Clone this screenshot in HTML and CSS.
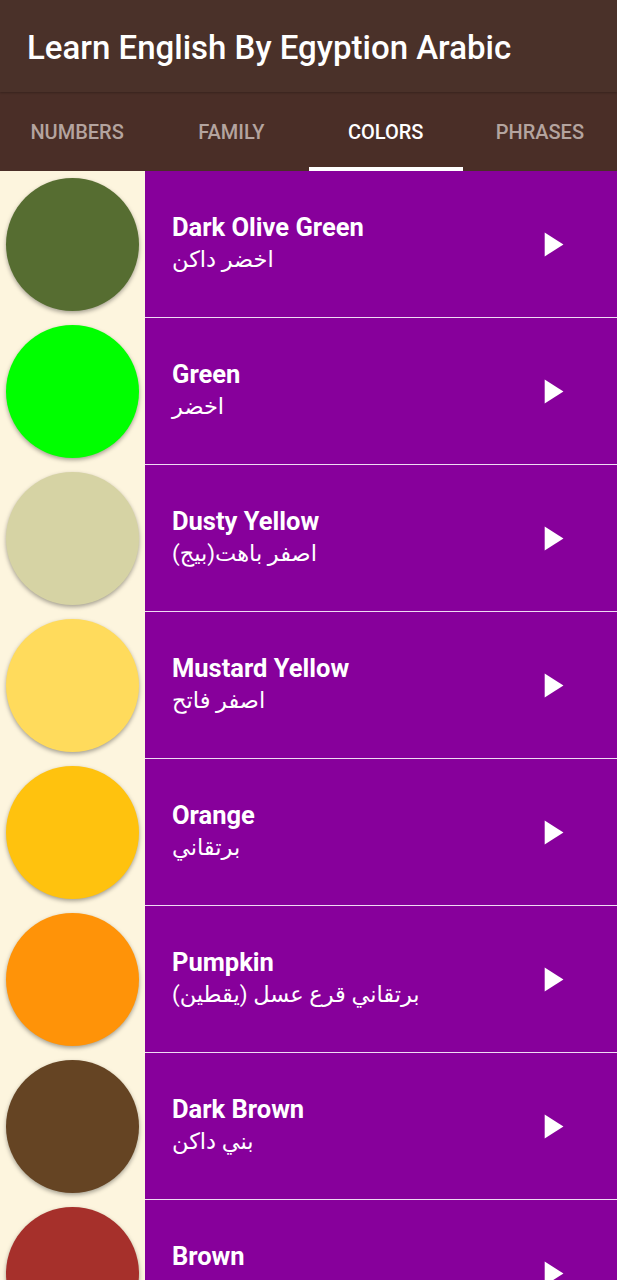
FILE: index.html
```html
<!DOCTYPE html>
<html>
<head>
<meta charset="utf-8">
<link rel="stylesheet" href="styles.css">
</head>
<body>
<header class="appbar">
  <h1 class="title">Learn English By Egyption Arabic</h1>
</header>
<nav class="tabs">
  <div class="tab">NUMBERS</div>
  <div class="tab">FAMILY</div>
  <div class="tab active">COLORS</div>
  <div class="tab">PHRASES</div>
</nav>
<main class="list">
  <div class="row">
    <div class="swatch-cell"><div class="swatch" style="background:#566d31"></div></div>
    <div class="info">
      <div class="texts"><div class="en">Dark Olive Green</div><div class="ar"><span dir="rtl">اخضر داكن</span></div></div>
      <svg class="play" viewBox="0 0 24 24"><path d="M8 5v14l11-7z"/></svg>
    </div>
  </div>
  <div class="row">
    <div class="swatch-cell"><div class="swatch" style="background:#00ff00"></div></div>
    <div class="info">
      <div class="texts"><div class="en">Green</div><div class="ar"><span dir="rtl">اخضر</span></div></div>
      <svg class="play" viewBox="0 0 24 24"><path d="M8 5v14l11-7z"/></svg>
    </div>
  </div>
  <div class="row">
    <div class="swatch-cell"><div class="swatch" style="background:#d6d3a4"></div></div>
    <div class="info">
      <div class="texts"><div class="en">Dusty Yellow</div><div class="ar"><span dir="rtl">اصفر باهت(بيج)</span></div></div>
      <svg class="play" viewBox="0 0 24 24"><path d="M8 5v14l11-7z"/></svg>
    </div>
  </div>
  <div class="row">
    <div class="swatch-cell"><div class="swatch" style="background:#ffdb5c"></div></div>
    <div class="info">
      <div class="texts"><div class="en">Mustard Yellow</div><div class="ar"><span dir="rtl">اصفر فاتح</span></div></div>
      <svg class="play" viewBox="0 0 24 24"><path d="M8 5v14l11-7z"/></svg>
    </div>
  </div>
  <div class="row">
    <div class="swatch-cell"><div class="swatch" style="background:#ffc20e"></div></div>
    <div class="info">
      <div class="texts"><div class="en">Orange</div><div class="ar"><span dir="rtl">برتقاني</span></div></div>
      <svg class="play" viewBox="0 0 24 24"><path d="M8 5v14l11-7z"/></svg>
    </div>
  </div>
  <div class="row">
    <div class="swatch-cell"><div class="swatch" style="background:#ff9308"></div></div>
    <div class="info">
      <div class="texts"><div class="en">Pumpkin</div><div class="ar"><span dir="rtl">برتقاني قرع عسل (يقطين)</span></div></div>
      <svg class="play" viewBox="0 0 24 24"><path d="M8 5v14l11-7z"/></svg>
    </div>
  </div>
  <div class="row">
    <div class="swatch-cell"><div class="swatch" style="background:#654423"></div></div>
    <div class="info">
      <div class="texts"><div class="en">Dark Brown</div><div class="ar"><span dir="rtl">بني داكن</span></div></div>
      <svg class="play" viewBox="0 0 24 24"><path d="M8 5v14l11-7z"/></svg>
    </div>
  </div>
  <div class="row">
    <div class="swatch-cell"><div class="swatch" style="background:#a6302b"></div></div>
    <div class="info">
      <div class="texts"><div class="en">Brown</div><div class="ar"><span dir="rtl">بني</span></div></div>
      <svg class="play" viewBox="0 0 24 24"><path d="M8 5v14l11-7z"/></svg>
    </div>
  </div>
</main>
</body>
</html>
```
FILE: styles.css
```css
html, body {
  margin: 0;
  padding: 0;
}
body {
  width: 617px;
  height: 1280px;
  overflow: hidden;
  font-family: Roboto, "DejaVu Sans", sans-serif;
  background: #fdf5de;
}
.appbar {
  height: 92px;
  background: #4a3129;
  display: flex;
  align-items: center;
  padding-left: 27px;
  box-shadow: 0 1px 2px rgba(0,0,0,0.25);
  position: relative;
  z-index: 2;
}
.title {
  margin: 0;
  color: #ffffff;
  font-size: 33px;
  font-weight: 500;
  letter-spacing: 0;
  padding-top: 3px;
}
.tabs {
  height: 79px;
  background: #4a2e27;
  display: grid;
  grid-template-columns: repeat(4, 1fr);
}
.tab {
  display: flex;
  align-items: center;
  justify-content: center;
  color: #b4a49f;
  font-size: 20px;
  font-weight: 500;
  border-bottom: 4px solid transparent;
  padding-top: 4px;
}
.tab.active {
  color: #ffffff;
  border-bottom-color: #ffffff;
}
.list {
  display: flex;
  flex-direction: column;
}
.row {
  display: flex;
  height: 147px;
}
.swatch-cell {
  width: 145px;
  flex: none;
  background: #fdf5de;
  display: flex;
  align-items: center;
  justify-content: center;
  padding-bottom: 1px;
  box-sizing: border-box;
}
.swatch {
  width: 133px;
  height: 133px;
  border-radius: 50%;
  box-shadow: 0 2px 4px rgba(0,0,0,0.35);
}
.info {
  flex: 1;
  background: #87009b;
  border-bottom: 1px solid #f0dcf4;
  display: flex;
  align-items: center;
  justify-content: space-between;
  padding-left: 27px;
  padding-right: 45px;
}
.texts {
  display: flex;
  flex-direction: column;
}
.en {
  color: #ffffff;
  font-size: 25.5px;
  font-weight: 700;
  line-height: 30px;
}
.ar {
  color: #ffffff;
  font-size: 22.5px;
  line-height: 34px;
}
.play {
  width: 41px;
  height: 41px;
  fill: #ffffff;
}
```
